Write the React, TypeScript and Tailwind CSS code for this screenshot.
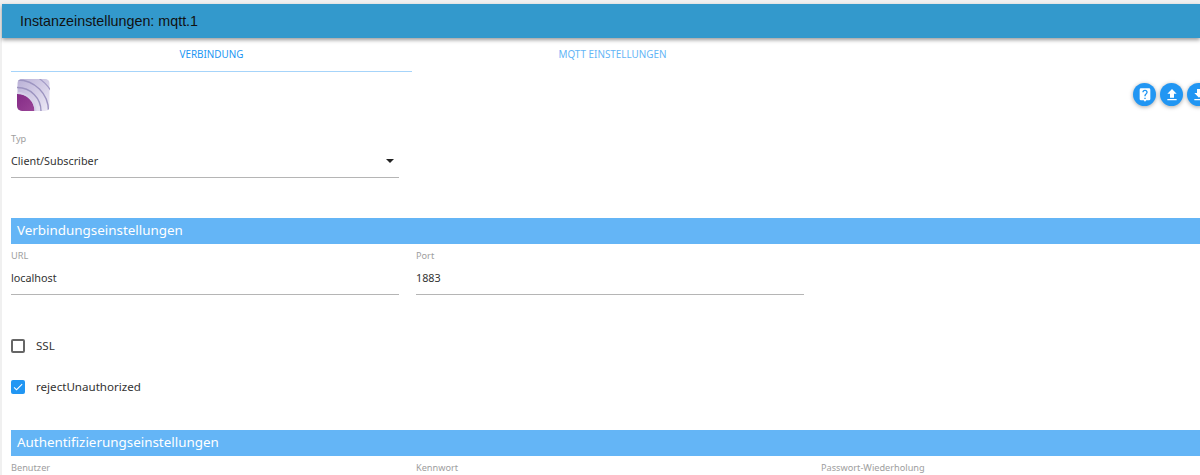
import React from 'react';

const mdi = {
  help: "M18 2H6a2 2 0 0 0-2 2v14a2 2 0 0 0 2 2h4l2 2 2-2h4a2 2 0 0 0 2-2V4a2 2 0 0 0-2-2zm-5 16h-2v-2h2v2zm2.07-7.75-.9.92C13.45 11.9 13 12.5 13 14h-2v-.5c0-1.1.45-2.1 1.17-2.83l1.24-1.26c.37-.36.59-.86.59-1.41a2 2 0 0 0-4 0H8a4 4 0 0 1 8 0c0 .88-.36 1.68-.93 2.25z",
  upload: "M9 16h6v-6h4l-7-7-7 7h4v6zm-4 2h14v2H5v-2z",
  download: "M19 9h-4V3H9v6H5l7 7 7-7zM5 18v2h14v-2H5z",
};

function RoundButton({ d }: { d: string }) {
  return (
    <button className="w-[23px] h-[23px] shrink-0 rounded-full bg-[#2196f3] flex items-center justify-center shadow-[0_1px_4px_rgba(0,0,0,0.35)]">
      <svg viewBox="0 0 24 24" className="w-[16px] h-[16px] fill-white">
        <path d={d} />
      </svg>
    </button>
  );
}

function Field({ label, value }: { label: string; value: string }) {
  return (
    <div className="w-[388px] shrink-0">
      <div className="text-[9.2px] leading-[12px] text-[#9e9e9e]">{label}</div>
      <div className="mt-[8px] h-[25px] text-[10.8px] leading-[15px] text-[#333] border-b border-[#b5b5b5]">{value}</div>
    </div>
  );
}

function SectionHeader({ title }: { title: string }) {
  return (
    <div className="h-[26px] pl-[6px] bg-[#64b5f6] text-white text-[13.4px] leading-[25px]">
      {title}
    </div>
  );
}

export default function App() {
  return (
    <div className="w-[1200px] h-[475px] overflow-hidden bg-[#f0f0f0] pt-[4px] pl-[2px] font-['Noto_Sans','Roboto',sans-serif]">
      <div className="relative z-10 h-[34px] bg-[#3399cc] pl-[18px] text-[14.3px] leading-[34px] text-[#111] font-['Liberation_Sans',Arial,sans-serif] shadow-[0_2px_4px_rgba(0,0,0,0.4)]">
        Instanzeinstellungen: mqtt.1
      </div>

      <div className="h-[437px] bg-white pl-[9px] overflow-hidden">
        {/* Tabs */}
        <div className="flex h-[34px] text-[9.9px] leading-[33px] text-center">
          <div className="w-[401px] flex flex-col justify-between text-[#2196f3]">
            VERBINDUNG
            <div className="h-px bg-[#a6d4fa]" />
          </div>
          <div className="w-[401px] text-[#64b5f6]">MQTT EINSTELLUNGEN</div>
        </div>

        {/* Logo and actions */}
        <div className="flex justify-between h-[44px]">
          <svg viewBox="0 0 32 32" className="ml-[6px] mt-[7px] w-[33px] h-[32px] rounded-[5px]">
            <defs>
              <linearGradient id="bg" x1="0" y1="0" x2="1" y2="1">
                <stop offset="0" stopColor="#b9b0d6" />
                <stop offset="1" stopColor="#eeeaf6" />
              </linearGradient>
              <linearGradient id="core" x1="0" y1="0" x2="1" y2="1">
                <stop offset="0" stopColor="#7a1f7e" />
                <stop offset="1" stopColor="#a4509f" />
              </linearGradient>
            </defs>
            <rect width="32" height="32" fill="url(#bg)" />
            <circle cx="0" cy="32" r="17" fill="url(#core)" />
            <path d="M0 14A18 18 0 0 1 18 32" fill="none" stroke="#d6d0e8" strokeWidth="2" />
            <circle cx="0" cy="32" r="23.5" fill="none" stroke="#9c94c0" strokeWidth="1.4" />
            <circle cx="0" cy="32" r="31" fill="none" stroke="#9c94c0" strokeWidth="1.4" />
            <circle cx="0" cy="32" r="39" fill="none" stroke="#a39bc6" strokeWidth="1.2" />
          </svg>
          <div className="flex gap-[4px] mt-[11px] -mr-[10px] h-[23px]">
            <RoundButton d={mdi.help} />
            <RoundButton d={mdi.upload} />
            <RoundButton d={mdi.download} />
          </div>
        </div>

        {/* Typ */}
        <div className="w-[388px] mt-[17px]">
          <div className="text-[9.2px] leading-[12px] text-[#9e9e9e]">Typ</div>
          <div className="mt-[8px] h-[25px] flex justify-between text-[10.8px] leading-[15px] text-[#333] border-b border-[#b5b5b5]">
            <span>Client/Subscriber</span>
            <span className="mt-[6px] mr-[5px] w-0 h-0 border-x-[4px] border-x-transparent border-t-[4px] border-t-[#222]" />
          </div>
        </div>

        <div className="mt-[40px]">
          <SectionHeader title="Verbindungseinstellungen" />
        </div>

        <div className="flex gap-[17px] mt-[6px]">
          <Field label="URL" value="localhost" />
          <Field label="Port" value="1883" />
        </div>

        {/* Checkboxes */}
        <div className="flex items-center gap-[11px] mt-[43px] h-[16px] text-[11.6px] text-[#333]">
          <span className="w-[14px] h-[14px] rounded-[2px] border-2 border-[#666]" />
          <span>SSL</span>
        </div>
        <div className="flex items-center gap-[11px] mt-[25px] h-[16px] text-[11.6px] text-[#333]">
          <span className="w-[14px] h-[14px] rounded-[2px] bg-[#2196f3] flex items-center justify-center">
            <svg viewBox="0 0 24 24" className="w-[12px] h-[12px] fill-white">
              <path d="M9 16.17 4.83 12l-1.42 1.41L9 19 21 7l-1.41-1.41z" />
            </svg>
          </span>
          <span>rejectUnauthorized</span>
        </div>

        <div className="mt-[35px]">
          <SectionHeader title="Authentifizierungseinstellungen" />
        </div>

        <div className="flex gap-[17px] mt-[6px] text-[9.2px] leading-[12px] text-[#9e9e9e]">
          <div className="w-[388px] shrink-0">Benutzer</div>
          <div className="w-[388px] shrink-0">Kennwort</div>
          <div className="w-[388px] shrink-0">Passwort-Wiederholung</div>
        </div>
      </div>
    </div>
  );
}
